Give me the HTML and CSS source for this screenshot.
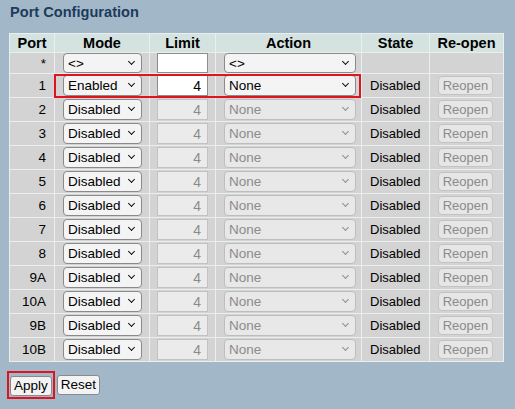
FILE: index.html
```html
<!DOCTYPE html>
<html>
<head>
<meta charset="utf-8">
<title>Port Configuration</title>
<link rel="stylesheet" href="styles.css">
</head>
<body>
<div class="page">
  <h1 class="title">Port Configuration</h1>
  <div class="tablewrap">
    <table class="cfg">
      <colgroup>
        <col class="c-port"><col class="c-mode"><col class="c-limit"><col class="c-action"><col class="c-state"><col class="c-reopen">
      </colgroup>
      <thead>
        <tr><th>Port</th><th>Mode</th><th>Limit</th><th>Action</th><th>State</th><th>Re-open</th></tr>
      </thead>
      <tbody>
        <tr class="star">
          <td class="port">*</td>
          <td><span class="sw"><select class="sel mode"><option>&lt;&gt;</option></select></span></td>
          <td><input class="lim" type="text" value=""></td>
          <td><span class="sw"><select class="sel act"><option>&lt;&gt;</option></select></span></td>
          <td></td>
          <td></td>
        </tr>
        <tr>
          <td class="port">1</td>
          <td><span class="sw"><select class="sel mode"><option>Enabled</option></select></span></td>
          <td><input class="lim" type="text" value="4"></td>
          <td><span class="sw"><select class="sel act"><option>None</option></select></span></td>
          <td class="state">Disabled</td>
          <td><button class="reopen" disabled>Reopen</button></td>
        </tr>
        <tr>
          <td class="port">2</td>
          <td><span class="sw"><select class="sel mode"><option>Disabled</option></select></span></td>
          <td><input class="lim" type="text" value="4" disabled></td>
          <td><span class="sw dis"><select class="sel act" disabled><option>None</option></select></span></td>
          <td class="state">Disabled</td>
          <td><button class="reopen" disabled>Reopen</button></td>
        </tr>
        <tr>
          <td class="port">3</td>
          <td><span class="sw"><select class="sel mode"><option>Disabled</option></select></span></td>
          <td><input class="lim" type="text" value="4" disabled></td>
          <td><span class="sw dis"><select class="sel act" disabled><option>None</option></select></span></td>
          <td class="state">Disabled</td>
          <td><button class="reopen" disabled>Reopen</button></td>
        </tr>
        <tr>
          <td class="port">4</td>
          <td><span class="sw"><select class="sel mode"><option>Disabled</option></select></span></td>
          <td><input class="lim" type="text" value="4" disabled></td>
          <td><span class="sw dis"><select class="sel act" disabled><option>None</option></select></span></td>
          <td class="state">Disabled</td>
          <td><button class="reopen" disabled>Reopen</button></td>
        </tr>
        <tr>
          <td class="port">5</td>
          <td><span class="sw"><select class="sel mode"><option>Disabled</option></select></span></td>
          <td><input class="lim" type="text" value="4" disabled></td>
          <td><span class="sw dis"><select class="sel act" disabled><option>None</option></select></span></td>
          <td class="state">Disabled</td>
          <td><button class="reopen" disabled>Reopen</button></td>
        </tr>
        <tr>
          <td class="port">6</td>
          <td><span class="sw"><select class="sel mode"><option>Disabled</option></select></span></td>
          <td><input class="lim" type="text" value="4" disabled></td>
          <td><span class="sw dis"><select class="sel act" disabled><option>None</option></select></span></td>
          <td class="state">Disabled</td>
          <td><button class="reopen" disabled>Reopen</button></td>
        </tr>
        <tr>
          <td class="port">7</td>
          <td><span class="sw"><select class="sel mode"><option>Disabled</option></select></span></td>
          <td><input class="lim" type="text" value="4" disabled></td>
          <td><span class="sw dis"><select class="sel act" disabled><option>None</option></select></span></td>
          <td class="state">Disabled</td>
          <td><button class="reopen" disabled>Reopen</button></td>
        </tr>
        <tr>
          <td class="port">8</td>
          <td><span class="sw"><select class="sel mode"><option>Disabled</option></select></span></td>
          <td><input class="lim" type="text" value="4" disabled></td>
          <td><span class="sw dis"><select class="sel act" disabled><option>None</option></select></span></td>
          <td class="state">Disabled</td>
          <td><button class="reopen" disabled>Reopen</button></td>
        </tr>
        <tr>
          <td class="port">9A</td>
          <td><span class="sw"><select class="sel mode"><option>Disabled</option></select></span></td>
          <td><input class="lim" type="text" value="4" disabled></td>
          <td><span class="sw dis"><select class="sel act" disabled><option>None</option></select></span></td>
          <td class="state">Disabled</td>
          <td><button class="reopen" disabled>Reopen</button></td>
        </tr>
        <tr>
          <td class="port">10A</td>
          <td><span class="sw"><select class="sel mode"><option>Disabled</option></select></span></td>
          <td><input class="lim" type="text" value="4" disabled></td>
          <td><span class="sw dis"><select class="sel act" disabled><option>None</option></select></span></td>
          <td class="state">Disabled</td>
          <td><button class="reopen" disabled>Reopen</button></td>
        </tr>
        <tr>
          <td class="port">9B</td>
          <td><span class="sw"><select class="sel mode"><option>Disabled</option></select></span></td>
          <td><input class="lim" type="text" value="4" disabled></td>
          <td><span class="sw dis"><select class="sel act" disabled><option>None</option></select></span></td>
          <td class="state">Disabled</td>
          <td><button class="reopen" disabled>Reopen</button></td>
        </tr>
        <tr>
          <td class="port">10B</td>
          <td><span class="sw"><select class="sel mode"><option>Disabled</option></select></span></td>
          <td><input class="lim" type="text" value="4" disabled></td>
          <td><span class="sw dis"><select class="sel act" disabled><option>None</option></select></span></td>
          <td class="state">Disabled</td>
          <td><button class="reopen" disabled>Reopen</button></td>
        </tr>
      </tbody>
    </table>
    <div class="highlight"></div>
  </div>
  <div class="actions">
    <span class="mark"><button class="btn">Apply</button></span>
    <button class="btn">Reset</button>
  </div>
</div>
</body>
</html>
```

FILE: styles.css
```css
html, body {
  margin: 0;
  padding: 0;
  background: #a2b8c8;
  font-family: "Liberation Sans", Arial, sans-serif;
  color: #000;
}

.page {
  padding: 4px 0 0 9px;
}

.title {
  margin: 0 0 12px 1px;
  font-size: 14.6px;
  line-height: 17px;
  font-weight: bold;
  color: #1d3b5c;
}

.tablewrap {
  position: relative;
  display: inline-block;
  vertical-align: top;
}

.cfg {
  border-collapse: separate;
  border-spacing: 1px;
  background: #eaeeee;
  table-layout: fixed;
  width: 495px;
}

.c-port { width: 44px; }
.c-mode { width: 94px; }
.c-limit { width: 65px; }
.c-action { width: 145px; }
.c-state { width: 67px; }
.c-reopen { width: 73px; }

.cfg th {
  background: #d4e3e0;
  font-size: 14.5px;
  font-weight: bold;
  height: 18px;
  padding: 0;
  text-align: center;
  line-height: 17px;
}

.cfg td {
  background: #d3d3d3;
  height: 23px;
  padding: 0 0 0 8px;
  font-size: 13px;
  line-height: 15px;
  vertical-align: middle;
  white-space: nowrap;
}

.cfg tr.star td {
  height: 20px;
}

.cfg td.port {
  text-align: right;
  padding: 0 8px 0 0;
  font-size: 13.5px;
  line-height: 13px;
}

.cfg td.state {
  padding: 0 0 0 8px;
  font-size: 13px;
  line-height: 13px;
}

.sw {
  position: relative;
  display: block;
  width: max-content;
}

.sw::after {
  content: "";
  position: absolute;
  right: 8px;
  top: 6px;
  width: 4px;
  height: 4px;
  border-right: 1.6px solid #111;
  border-bottom: 1.6px solid #111;
  transform: rotate(45deg);
  pointer-events: none;
}

.sw.dis::after {
  border-color: #8e8e8e;
  border-width: 0 1.2px 1.2px 0;
}

.sel {
  -webkit-appearance: none;
  appearance: none;
  display: block;
  box-sizing: border-box;
  height: 21px;
  margin: 0;
  padding: 0 0 0 4px;
  border: 1px solid #8a8a8a;
  border-radius: 4px;
  background: #f4f4f4;
  color: #000;
  font-family: "Liberation Sans", Arial, sans-serif;
  font-size: 13.5px;
}

.sel.mode { width: 79px; }
.sel.act { width: 132px; }

.sel:disabled {
  background: #e8e8e8;
  border-color: #bdbdbd;
  color: #8b8b8b;
  opacity: 1;
}

.star .sel {
  height: 20px;
}

.lim {
  display: block;
  box-sizing: border-box;
  width: 51px;
  height: 21px;
  margin: 0 0 0 -1px;
  padding: 0 6px 0 2px;
  border: 1px solid #8d8d8d;
  background: #fff;
  text-align: right;
  font-family: "Liberation Sans", Arial, sans-serif;
  font-size: 14px;
  color: #000;
}

.star .lim {
  height: 20px;
}

.lim:disabled {
  background: #ebebeb;
  border-color: #c2c2c2;
  color: #8b8b8b;
}

.reopen {
  display: block;
  box-sizing: border-box;
  width: 55px;
  height: 19px;
  margin: 0;
  padding: 0;
  border: 1px solid #c4c4c4;
  border-radius: 4px;
  background: #e6e6e6;
  color: #8b8b8b;
  font-family: "Liberation Sans", Arial, sans-serif;
  font-size: 13px;
  line-height: 17px;
}

.highlight {
  position: absolute;
  left: 45px;
  top: 41px;
  width: 303px;
  height: 20px;
  border: 2px solid #e0141e;
  pointer-events: none;
}

.actions {
  display: flex;
  align-items: center;
  gap: 2px;
  margin: 9px 0 0 -2px;
}

.mark {
  display: inline-flex;
  border: 2px solid #e0141e;
  padding: 3px 1px 1px 1px;
}

.btn {
  box-sizing: border-box;
  height: 20px;
  margin: 0;
  padding: 0 3px;
  border: 1px solid #8a8a8a;
  border-radius: 3px;
  background: #f3f3f3;
  color: #000;
  font-family: "Liberation Sans", Arial, sans-serif;
  font-size: 13.5px;
  line-height: 18px;
}
```
